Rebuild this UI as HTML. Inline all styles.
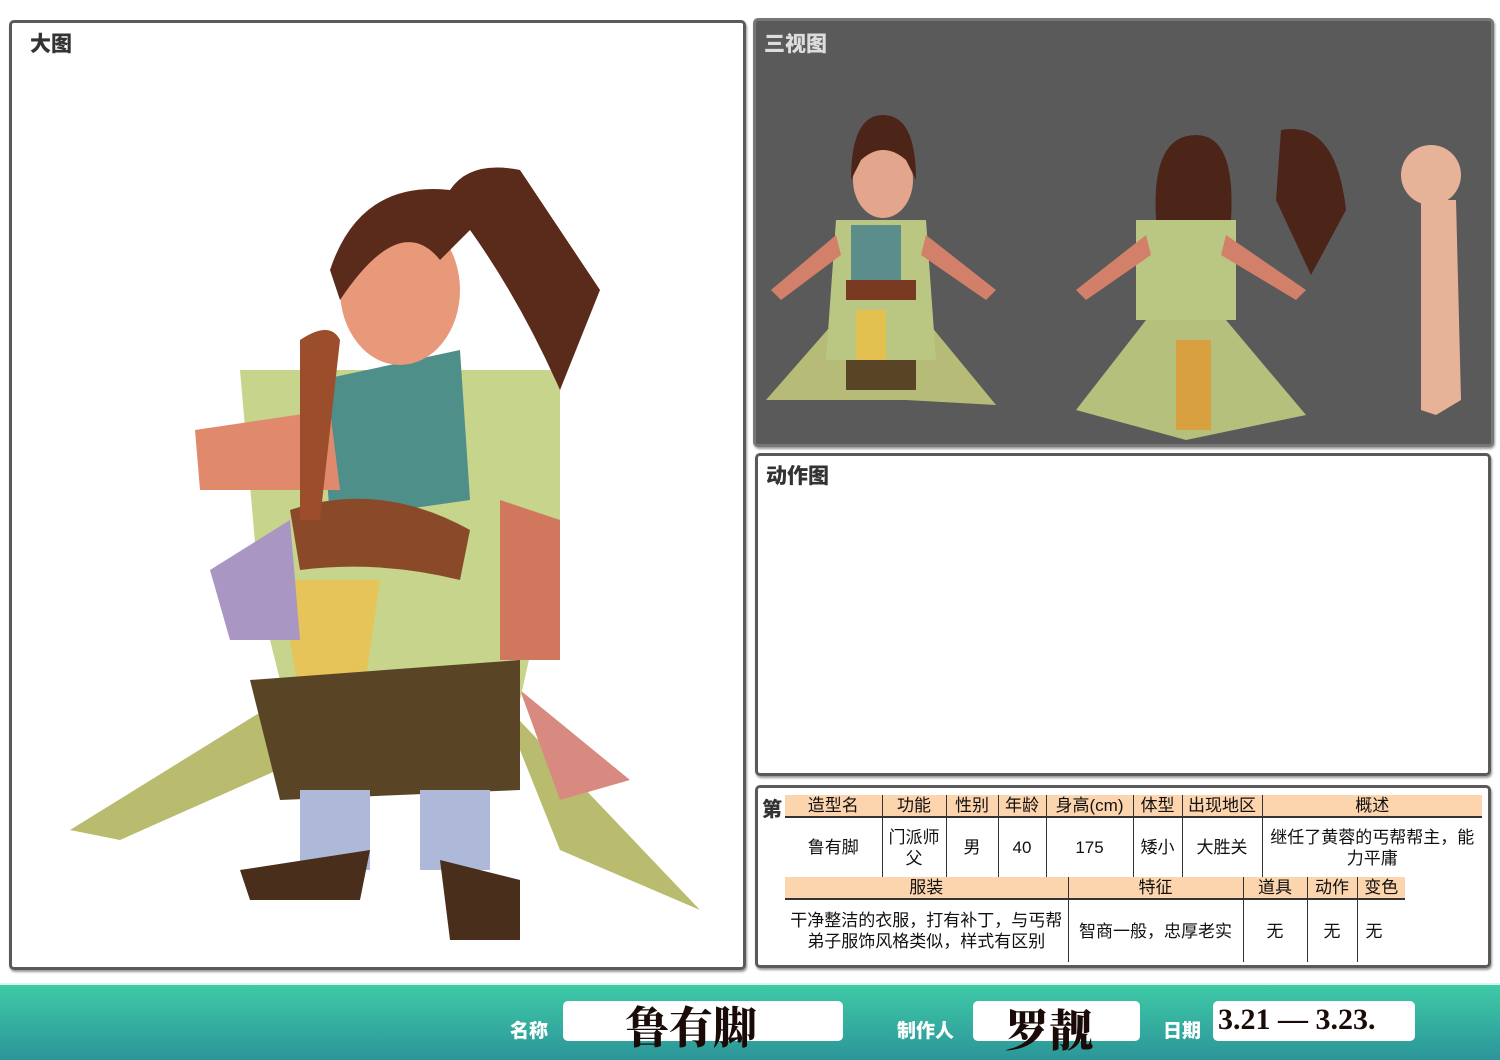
<!DOCTYPE html>
<html><head><meta charset="utf-8"><style>
*{margin:0;padding:0;box-sizing:border-box}
body{width:1500px;height:1060px;background:#fff;position:relative;overflow:hidden;font-family:"Liberation Sans","Noto Sans CJK SC",sans-serif}
.p{position:absolute;border:3px solid #5a5a5a;border-radius:5px;box-shadow:1px 2px 2px #999}
.lbl{position:absolute;font-weight:900;font-size:21px;color:#333}
table{border-collapse:collapse;position:absolute;font-size:17px;color:#111;text-align:center}
td{border-left:1px solid #333;padding:0;line-height:21px}
td:first-child{border-left:none}
.h td{background:#fcd4ad;border-bottom:2px solid #333;height:22px}
.bar{position:absolute;left:0;top:983px;width:1500px;height:77px;background:linear-gradient(#3ecaa7,#2c9599);border-top:2px solid #d8f3ea}
.box{position:absolute;background:#fff;border-radius:5px;height:40px;top:1001px}
.bl{position:absolute;top:1016px;color:#fff;font-weight:900;font-size:19px}
.sig{position:absolute;font-family:"Noto Serif CJK SC","Liberation Serif",serif;font-size:44px;color:#1a0a08;font-weight:900}
</style></head><body>
<div class="p" style="left:9px;top:20px;width:737px;height:950px"></div>
<div class="lbl" style="left:30px;top:28px">大图</div>
<svg style="position:absolute;left:60px;top:150px" width="660" height="800" viewBox="60 150 660 800">
<path d="M70 830 L280 700 L300 760 L120 840Z" fill="#b9bc6e"/>
<path d="M500 700 L700 910 L560 850Z" fill="#b9bc6e"/>
<path d="M520 690 L630 780 L560 800Z" fill="#d88a80"/>
<path d="M240 370 L560 370 L560 520 L520 700 L300 760 L260 600Z" fill="#c6d48c"/>
<path d="M320 380 L460 350 L470 500 L330 520Z" fill="#4f8f8a"/>
<path d="M280 580 L380 580 L360 720 L300 700Z" fill="#e6c45a"/>
<path d="M250 680 L520 660 L520 790 L280 800Z" fill="#5a4426"/>
<path d="M210 570 L290 520 L300 640 L230 640Z" fill="#a996c2"/>
<path d="M290 510 Q380 480 470 530 L460 580 Q380 560 300 570Z" fill="#8a4a2a"/>
<rect x="300" y="790" width="70" height="80" fill="#aeb8d8"/>
<rect x="420" y="790" width="70" height="80" fill="#aeb8d8"/>
<path d="M240 870 L370 850 L360 900 L250 900Z" fill="#4a2e1c"/>
<path d="M440 860 L520 880 L520 940 L450 940Z" fill="#4a2e1c"/>
<path d="M195 430 L330 410 L340 490 L200 490Z" fill="#e1896c"/>
<path d="M500 500 L560 520 L560 660 L500 660Z" fill="#d0775e"/>
<ellipse cx="400" cy="290" rx="60" ry="75" fill="#e8997a"/>
<path d="M330 270 Q360 180 450 190 Q470 160 520 170 L600 290 L560 390 Q520 300 470 230 L440 260 Q400 210 340 300Z" fill="#5a2a1a"/>
<path d="M300 340 Q330 320 340 340 L320 520 L300 520Z" fill="#9b4d2c"/>
</svg>

<div class="p" style="left:753px;top:18px;width:741px;height:429px;background:#5a5a5a;border-color:#777"></div>
<div class="lbl" style="left:764px;top:28px;color:#ddd">三视图</div>
<svg style="position:absolute;left:756px;top:20px" width="735" height="424">
<path d="M10 380 L80 300 L170 300 L240 385 L150 380 L90 380Z" fill="#b6bc78"/>
<path d="M80 200 L170 200 L180 340 L70 340Z" fill="#bac783"/>
<rect x="95" y="205" width="50" height="60" fill="#5b8e8a"/>
<path d="M90 260 L160 260 L160 280 L90 280Z" fill="#7a3a22"/>
<rect x="100" y="290" width="30" height="60" fill="#e2c150"/>
<rect x="90" y="340" width="70" height="30" fill="#5a4426"/>
<path d="M15 270 L80 215 L85 235 L25 280Z" fill="#d2806a"/>
<path d="M240 270 L170 215 L165 235 L230 280Z" fill="#d2806a"/>
<ellipse cx="127" cy="160" rx="30" ry="38" fill="#e3a68c"/>
<path d="M95 160 Q95 95 127 95 Q160 95 160 160 L150 140 Q127 120 105 140Z" fill="#4d2418"/>
<path d="M320 390 L390 300 L470 300 L550 395 L430 420Z" fill="#b4c07c"/>
<path d="M380 200 L480 200 L480 300 L380 300Z" fill="#bac783"/>
<rect x="420" y="320" width="35" height="90" fill="#d9a040"/>
<path d="M320 270 L390 215 L395 235 L330 280Z" fill="#d2806a"/>
<path d="M550 270 L470 215 L465 235 L540 280Z" fill="#d2806a"/>
<path d="M400 200 Q395 115 440 115 Q480 115 475 200Z" fill="#4d2418"/>
<path d="M525 110 Q580 100 590 190 L555 255 L520 180Z" fill="#4d2418"/>
<ellipse cx="675" cy="155" rx="30" ry="30" fill="#e6b398"/>
<path d="M665 180 L700 180 L705 380 L680 395 L665 390Z" fill="#e6b398"/>
</svg>

<div class="p" style="left:755px;top:453px;width:736px;height:323px"></div>
<div class="lbl" style="left:766px;top:460px">动作图</div>

<div class="p" style="left:755px;top:785px;width:736px;height:183px"></div>
<div class="lbl" style="left:762px;top:793px;font-size:20px">第</div>
<table style="left:785px;top:795px;width:697px">
<tr class="h"><td style="width:97px">造型名</td><td style="width:64px">功能</td><td style="width:52px">性别</td><td style="width:48px">年龄</td><td style="width:87px">身高(cm)</td><td style="width:49px">体型</td><td style="width:80px">出现地区</td><td>概述</td></tr>
<tr style="height:60px"><td>鲁有脚</td><td>门派师<br>父</td><td>男</td><td>40</td><td>175</td><td>矮小</td><td>大胜关</td><td>继任了黄蓉的丐帮帮主，能<br>力平庸</td></tr>
</table>
<table style="left:785px;top:877px;width:620px">
<tr class="h"><td style="width:283px">服装</td><td style="width:175px">特征</td><td style="width:64px">道具</td><td style="width:50px">动作</td><td>变色</td></tr>
<tr style="height:63px"><td>干净整洁的衣服，打有补丁，与丐帮<br>弟子服饰风格类似，样式有区别</td><td>智商一般，忠厚老实</td><td>无</td><td>无</td><td style="text-align:left;padding-left:8px">无</td></tr>
</table>

<div class="bar"></div>
<div class="bl" style="left:510px">名称</div>
<div class="box" style="left:563px;width:280px"></div>
<div class="sig" style="left:625px;top:992px">鲁有脚</div>
<div class="bl" style="left:897px">制作人</div>
<div class="box" style="left:973px;width:167px"></div>
<div class="sig" style="left:1005px;top:995px">罗靓</div>
<div class="bl" style="left:1163px">日期</div>
<div class="box" style="left:1213px;width:202px"></div>
<div class="sig" style="left:1218px;top:1003px;font-size:30px;font-family:'Liberation Serif',serif">3.21 — 3.23.</div>
</body></html>
